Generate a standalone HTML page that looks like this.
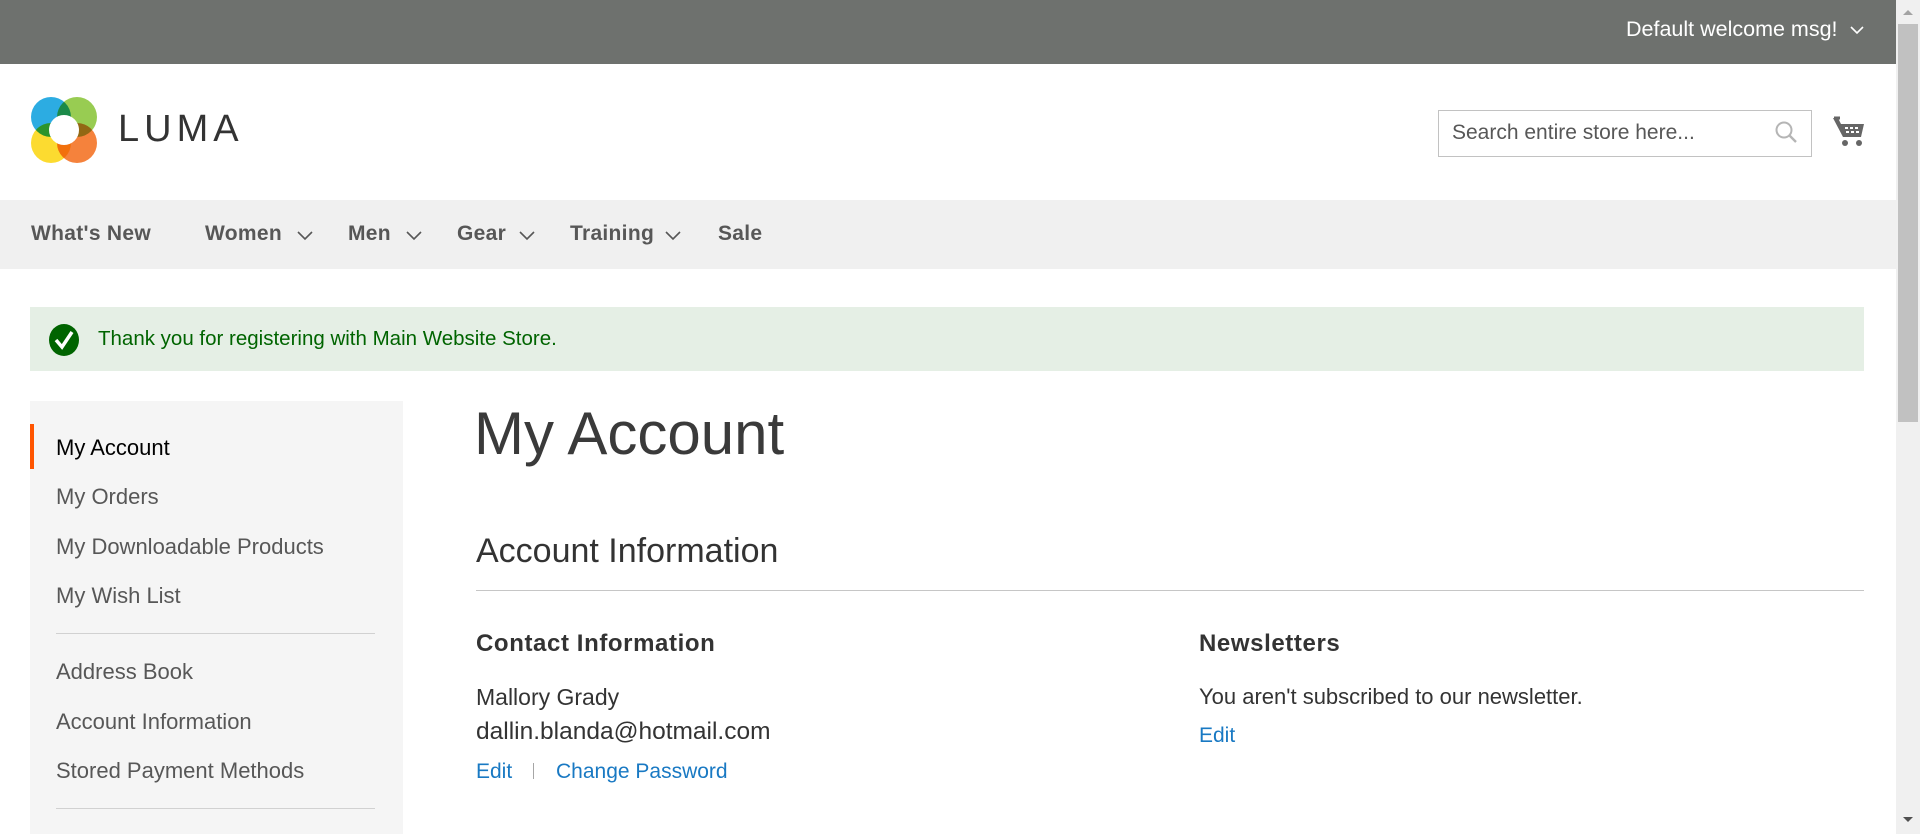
<!DOCTYPE html>
<html><head><meta charset="utf-8"><style>
*{margin:0;padding:0;box-sizing:border-box}
body{width:1920px;height:834px;overflow:hidden;background:#fff;font-family:"Liberation Sans",sans-serif;color:#333;position:relative}
.a{position:absolute;white-space:nowrap}
.top{left:0;top:0;width:1896px;height:64px;background:#6e716e}
.nav{left:0;top:200px;width:1896px;height:69px;background:#f0f0f0}
.nav span{position:absolute;top:22px;font-weight:bold;font-size:21px;color:#575757;letter-spacing:.3px}
.msg{left:30px;top:307px;width:1834px;height:64px;background:#e5efe5}
.side{left:30px;top:401px;width:373px;height:433px;background:#f5f5f5}
.si{left:56px;font-size:22px;color:#575757}
.lnk{color:#1979c3;font-size:21px}
.sb{left:1896px;top:0;width:24px;height:834px;background:#f0f0f0}
</style></head><body>
<div class="a top"></div>
<div class="a" style="left:1626px;top:17px;font-size:21.5px;color:#fff">Default welcome msg!</div>
<svg class="a" style="left:1850px;top:25px" width="14" height="10"><path d="M1 2 L7 8 L13 2" stroke="#fff" stroke-width="1.6" fill="none"/></svg>

<svg class="a" style="left:30px;top:96px" width="68" height="68" viewBox="0 0 68 68">
<g style="mix-blend-mode:multiply"><circle cx="21" cy="21" r="20" fill="#21a8e0" opacity=".95"/></g>
<g style="mix-blend-mode:multiply"><circle cx="47" cy="21" r="20" fill="#8dc63f" opacity=".9"/></g>
<g style="mix-blend-mode:multiply"><circle cx="21" cy="47" r="20" fill="#fcd925" opacity=".95"/></g>
<g style="mix-blend-mode:multiply"><circle cx="47" cy="47" r="20" fill="#f47b32" opacity=".95"/></g>
<circle cx="34" cy="34" r="15" fill="#fff"/>
</svg>
<div class="a" style="left:118px;top:108px;font-size:38px;letter-spacing:5px;color:#333">LUMA</div>

<div class="a" style="left:1438px;top:110px;width:374px;height:47px;border:1px solid #c2c2c2;background:#fff"></div>
<div class="a" style="left:1452px;top:121px;font-size:21px;color:#575757">Search entire store here...</div>
<svg class="a" style="left:1774px;top:120px" width="24" height="24"><circle cx="10" cy="10" r="7.5" stroke="#b5b5b5" stroke-width="2" fill="none"/><path d="M15.5 15.5 L22 22" stroke="#b5b5b5" stroke-width="2.4"/></svg>
<svg class="a" style="left:1832px;top:115px" width="34" height="34" viewBox="0 0 34 34"><path d="M1 3 L6 3 L9 9 L32 9 L29 22 L11 22 Z" fill="#666"/><path d="M2 3 L8 3" stroke="#666" stroke-width="3"/><rect x="13" y="12" width="3" height="2" fill="#fff"/><rect x="18" y="12" width="3" height="2" fill="#fff"/><rect x="23" y="12" width="3" height="2" fill="#fff"/><rect x="14" y="16" width="3" height="2" fill="#fff"/><rect x="19" y="16" width="3" height="2" fill="#fff"/><rect x="24" y="16" width="3" height="2" fill="#fff"/><circle cx="13" cy="28" r="3" fill="#666"/><circle cx="27" cy="28" r="3" fill="#666"/></svg>

<div class="a nav">
<span style="left:31px">What's New</span>
<span style="left:205px">Women</span>
<span style="left:348px">Men</span>
<span style="left:457px">Gear</span>
<span style="left:570px">Training</span>
<span style="left:718px">Sale</span>
<svg style="position:absolute;left:297px;top:31px" width="16" height="10"><path d="M1 1 L8 8 L15 1" stroke="#575757" stroke-width="1.6" fill="none"/></svg>
<svg style="position:absolute;left:406px;top:31px" width="16" height="10"><path d="M1 1 L8 8 L15 1" stroke="#575757" stroke-width="1.6" fill="none"/></svg>
<svg style="position:absolute;left:519px;top:31px" width="16" height="10"><path d="M1 1 L8 8 L15 1" stroke="#575757" stroke-width="1.6" fill="none"/></svg>
<svg style="position:absolute;left:665px;top:31px" width="16" height="10"><path d="M1 1 L8 8 L15 1" stroke="#575757" stroke-width="1.6" fill="none"/></svg>
</div>

<div class="a msg"></div>
<svg class="a" style="left:48px;top:323px" width="32" height="34"><ellipse cx="16" cy="17" rx="15" ry="16" fill="#006400"/><path d="M8 17 L14 24 L24 9" stroke="#fff" stroke-width="3.5" fill="none"/></svg>
<div class="a" style="left:98px;top:327px;font-size:20.5px;color:#006400">Thank you for registering with Main Website Store.</div>

<div class="a side"></div>
<div class="a" style="left:30px;top:424px;width:4px;height:45px;background:#ff5501"></div>
<div class="a si" style="top:435px;color:#000">My Account</div>
<div class="a si" style="top:484px">My Orders</div>
<div class="a si" style="top:534px">My Downloadable Products</div>
<div class="a si" style="top:583px">My Wish List</div>
<div class="a" style="left:56px;top:633px;width:319px;height:1px;background:#d1d1d1"></div>
<div class="a si" style="top:659px">Address Book</div>
<div class="a si" style="top:709px">Account Information</div>
<div class="a si" style="top:758px">Stored Payment Methods</div>
<div class="a" style="left:56px;top:808px;width:319px;height:1px;background:#d1d1d1"></div>

<div class="a" style="left:474px;top:399px;font-size:60px;color:#3a3a3a;font-weight:300">My Account</div>
<div class="a" style="left:476px;top:532px;font-size:34px;color:#333">Account Information</div>
<div class="a" style="left:476px;top:590px;width:1388px;height:1px;background:#c6c6c6"></div>
<div class="a" style="left:476px;top:630px;font-size:24px;font-weight:bold;color:#333;letter-spacing:.6px">Contact Information</div>
<div class="a" style="left:476px;top:684px;font-size:23px">Mallory Grady</div>
<div class="a" style="left:476px;top:718px;font-size:24.5px">dallin.blanda@hotmail.com</div>
<div class="a lnk" style="left:476px;top:760px">Edit</div>
<div class="a" style="left:533px;top:763px;width:1px;height:16px;background:#a6a6a6"></div>
<div class="a lnk" style="left:556px;top:760px">Change Password</div>
<div class="a" style="left:1199px;top:630px;font-size:24px;font-weight:bold;color:#333;letter-spacing:.6px">Newsletters</div>
<div class="a" style="left:1199px;top:684px;font-size:22px">You aren't subscribed to our newsletter.</div>
<div class="a lnk" style="left:1199px;top:724px">Edit</div>

<div class="a sb"></div>
<div class="a" style="left:1898px;top:24px;width:20px;height:398px;background:#c1c1c1"></div>
<svg class="a" style="left:1901px;top:8px" width="14" height="8"><path d="M2 7 L7 2 L12 7Z" fill="#a3a3a3"/></svg>
<svg class="a" style="left:1901px;top:816px" width="14" height="8"><path d="M2 1 L7 6 L12 1Z" fill="#505050"/></svg>
</body></html>
